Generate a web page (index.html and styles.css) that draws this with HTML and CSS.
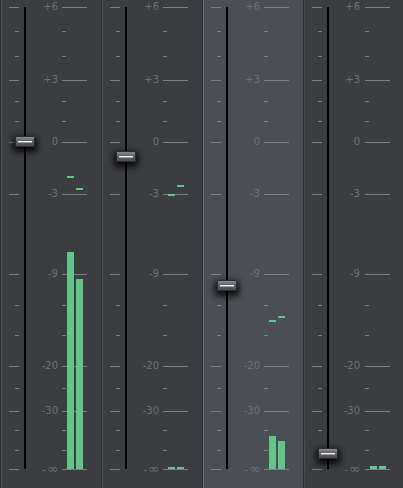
FILE: index.html
```html
<!DOCTYPE html>
<html>
<head>
<meta charset="utf-8">
<link rel="stylesheet" href="styles.css">
</head>
<body>
<div class="mixer">
  <div class="strip">
    <div class="scale">
      <div class="tick major" style="top:7px"><span class="tl"></span><span class="lbl">+6</span><span class="tr"></span></div>
      <div class="tick" style="top:31px"><span class="tl"></span><span class="lbl"></span><span class="tr"></span></div>
      <div class="tick" style="top:56px"><span class="tl"></span><span class="lbl"></span><span class="tr"></span></div>
      <div class="tick major" style="top:80px"><span class="tl"></span><span class="lbl">+3</span><span class="tr"></span></div>
      <div class="tick" style="top:101px"><span class="tl"></span><span class="lbl"></span><span class="tr"></span></div>
      <div class="tick" style="top:121px"><span class="tl"></span><span class="lbl"></span><span class="tr"></span></div>
      <div class="tick major" style="top:142px"><span class="tl"></span><span class="lbl">0</span><span class="tr"></span></div>
      <div class="tick major" style="top:194px"><span class="tl"></span><span class="lbl">-3</span><span class="tr"></span></div>
      <div class="tick major" style="top:274px"><span class="tl"></span><span class="lbl">-9</span><span class="tr"></span></div>
      <div class="tick" style="top:305px"><span class="tl"></span><span class="lbl"></span><span class="tr"></span></div>
      <div class="tick" style="top:335px"><span class="tl"></span><span class="lbl"></span><span class="tr"></span></div>
      <div class="tick major" style="top:366px"><span class="tl"></span><span class="lbl">-20</span><span class="tr"></span></div>
      <div class="tick" style="top:388px"><span class="tl"></span><span class="lbl"></span><span class="tr"></span></div>
      <div class="tick major" style="top:411px"><span class="tl"></span><span class="lbl">-30</span><span class="tr"></span></div>
      <div class="tick" style="top:430px"><span class="tl"></span><span class="lbl"></span><span class="tr"></span></div>
      <div class="tick" style="top:450px"><span class="tl"></span><span class="lbl"></span><span class="tr"></span></div>
      <div class="tick major" style="top:469px"><span class="tl"></span><span class="lbl">-<span class="inf">∞</span></span><span class="tr"></span></div>
    </div>
    <div class="track"></div>
    <div class="meter">
      <div class="bar b1" style="height:217px"></div>
      <div class="bar b2" style="height:190px"></div>
      <div class="peak b1" style="top:176px"></div>
      <div class="peak b2" style="top:188px"></div>
    </div>
    <div class="knob" style="top:136px"></div>
  </div>

  <div class="strip">
    <div class="scale">
      <div class="tick major" style="top:7px"><span class="tl"></span><span class="lbl">+6</span><span class="tr"></span></div>
      <div class="tick" style="top:31px"><span class="tl"></span><span class="lbl"></span><span class="tr"></span></div>
      <div class="tick" style="top:56px"><span class="tl"></span><span class="lbl"></span><span class="tr"></span></div>
      <div class="tick major" style="top:80px"><span class="tl"></span><span class="lbl">+3</span><span class="tr"></span></div>
      <div class="tick" style="top:101px"><span class="tl"></span><span class="lbl"></span><span class="tr"></span></div>
      <div class="tick" style="top:121px"><span class="tl"></span><span class="lbl"></span><span class="tr"></span></div>
      <div class="tick major" style="top:142px"><span class="tl"></span><span class="lbl">0</span><span class="tr"></span></div>
      <div class="tick major" style="top:194px"><span class="tl"></span><span class="lbl">-3</span><span class="tr"></span></div>
      <div class="tick major" style="top:274px"><span class="tl"></span><span class="lbl">-9</span><span class="tr"></span></div>
      <div class="tick" style="top:305px"><span class="tl"></span><span class="lbl"></span><span class="tr"></span></div>
      <div class="tick" style="top:335px"><span class="tl"></span><span class="lbl"></span><span class="tr"></span></div>
      <div class="tick major" style="top:366px"><span class="tl"></span><span class="lbl">-20</span><span class="tr"></span></div>
      <div class="tick" style="top:388px"><span class="tl"></span><span class="lbl"></span><span class="tr"></span></div>
      <div class="tick major" style="top:411px"><span class="tl"></span><span class="lbl">-30</span><span class="tr"></span></div>
      <div class="tick" style="top:430px"><span class="tl"></span><span class="lbl"></span><span class="tr"></span></div>
      <div class="tick" style="top:450px"><span class="tl"></span><span class="lbl"></span><span class="tr"></span></div>
      <div class="tick major" style="top:469px"><span class="tl"></span><span class="lbl">-<span class="inf">∞</span></span><span class="tr"></span></div>
    </div>
    <div class="track"></div>
    <div class="meter">
      <div class="bar b1" style="height:2px"></div>
      <div class="bar b2" style="height:2px"></div>
      <div class="peak b1" style="top:194px"></div>
      <div class="peak b2" style="top:185px"></div>
    </div>
    <div class="knob" style="top:151px"></div>
  </div>

  <div class="strip selected">
    <div class="scale">
      <div class="tick major" style="top:7px"><span class="tl"></span><span class="lbl">+6</span><span class="tr"></span></div>
      <div class="tick" style="top:31px"><span class="tl"></span><span class="lbl"></span><span class="tr"></span></div>
      <div class="tick" style="top:56px"><span class="tl"></span><span class="lbl"></span><span class="tr"></span></div>
      <div class="tick major" style="top:80px"><span class="tl"></span><span class="lbl">+3</span><span class="tr"></span></div>
      <div class="tick" style="top:101px"><span class="tl"></span><span class="lbl"></span><span class="tr"></span></div>
      <div class="tick" style="top:121px"><span class="tl"></span><span class="lbl"></span><span class="tr"></span></div>
      <div class="tick major" style="top:142px"><span class="tl"></span><span class="lbl">0</span><span class="tr"></span></div>
      <div class="tick major" style="top:194px"><span class="tl"></span><span class="lbl">-3</span><span class="tr"></span></div>
      <div class="tick major" style="top:274px"><span class="tl"></span><span class="lbl">-9</span><span class="tr"></span></div>
      <div class="tick" style="top:305px"><span class="tl"></span><span class="lbl"></span><span class="tr"></span></div>
      <div class="tick" style="top:335px"><span class="tl"></span><span class="lbl"></span><span class="tr"></span></div>
      <div class="tick major" style="top:366px"><span class="tl"></span><span class="lbl">-20</span><span class="tr"></span></div>
      <div class="tick" style="top:388px"><span class="tl"></span><span class="lbl"></span><span class="tr"></span></div>
      <div class="tick major" style="top:411px"><span class="tl"></span><span class="lbl">-30</span><span class="tr"></span></div>
      <div class="tick" style="top:430px"><span class="tl"></span><span class="lbl"></span><span class="tr"></span></div>
      <div class="tick" style="top:450px"><span class="tl"></span><span class="lbl"></span><span class="tr"></span></div>
      <div class="tick major" style="top:469px"><span class="tl"></span><span class="lbl">-<span class="inf">∞</span></span><span class="tr"></span></div>
    </div>
    <div class="track"></div>
    <div class="meter">
      <div class="bar b1" style="height:33px"></div>
      <div class="bar b2" style="height:28px"></div>
      <div class="peak b1" style="top:320px"></div>
      <div class="peak b2" style="top:316px"></div>
    </div>
    <div class="knob" style="top:280px"></div>
  </div>

  <div class="strip">
    <div class="scale">
      <div class="tick major" style="top:7px"><span class="tl"></span><span class="lbl">+6</span><span class="tr"></span></div>
      <div class="tick" style="top:31px"><span class="tl"></span><span class="lbl"></span><span class="tr"></span></div>
      <div class="tick" style="top:56px"><span class="tl"></span><span class="lbl"></span><span class="tr"></span></div>
      <div class="tick major" style="top:80px"><span class="tl"></span><span class="lbl">+3</span><span class="tr"></span></div>
      <div class="tick" style="top:101px"><span class="tl"></span><span class="lbl"></span><span class="tr"></span></div>
      <div class="tick" style="top:121px"><span class="tl"></span><span class="lbl"></span><span class="tr"></span></div>
      <div class="tick major" style="top:142px"><span class="tl"></span><span class="lbl">0</span><span class="tr"></span></div>
      <div class="tick major" style="top:194px"><span class="tl"></span><span class="lbl">-3</span><span class="tr"></span></div>
      <div class="tick major" style="top:274px"><span class="tl"></span><span class="lbl">-9</span><span class="tr"></span></div>
      <div class="tick" style="top:305px"><span class="tl"></span><span class="lbl"></span><span class="tr"></span></div>
      <div class="tick" style="top:335px"><span class="tl"></span><span class="lbl"></span><span class="tr"></span></div>
      <div class="tick major" style="top:366px"><span class="tl"></span><span class="lbl">-20</span><span class="tr"></span></div>
      <div class="tick" style="top:388px"><span class="tl"></span><span class="lbl"></span><span class="tr"></span></div>
      <div class="tick major" style="top:411px"><span class="tl"></span><span class="lbl">-30</span><span class="tr"></span></div>
      <div class="tick" style="top:430px"><span class="tl"></span><span class="lbl"></span><span class="tr"></span></div>
      <div class="tick" style="top:450px"><span class="tl"></span><span class="lbl"></span><span class="tr"></span></div>
      <div class="tick major" style="top:469px"><span class="tl"></span><span class="lbl">-<span class="inf">∞</span></span><span class="tr"></span></div>
    </div>
    <div class="track"></div>
    <div class="meter">
      <div class="bar b1" style="height:3px"></div>
      <div class="bar b2" style="height:3px"></div>
    </div>
    <div class="knob" style="top:448px"></div>
  </div>
</div>
</body>
</html>
```

FILE: styles.css
```css
* { box-sizing: border-box; }
html, body {
  margin: 0;
  padding: 0;
  width: 403px;
  height: 488px;
  overflow: hidden;
  background: #3b3d41;
  font-family: "DejaVu Sans", sans-serif;
}
.mixer {
  display: grid;
  grid-template-columns: 101px 101px 101px 100px;
  height: 488px;
}
.strip {
  position: relative;
  height: 488px;
  background: #3b3d41;
  border-left: 1px solid #2c2e31;
  box-shadow: inset 1px 0 0 #4a4d52;
}
.strip.selected {
  background: #4a4f55;
  border-left: 1px solid #2c2e31;
  box-shadow: inset 1px 0 0 #6c7178;
}
.scale {
  position: absolute;
  inset: 0;
}
.tick {
  position: absolute;
  left: 0;
  right: 0;
  height: 1px;
}
.tl {
  position: absolute;
  top: 0;
  left: 14px;
  width: 4px;
  height: 1px;
  background: #7d8084;
}
.tr {
  position: absolute;
  top: 0;
  left: 61px;
  width: 4px;
  height: 1px;
  background: #7d8084;
}
.tick.major .tl { left: 8px; width: 10px; }
.tick.major .tr { width: 25px; }
.lbl {
  position: absolute;
  right: 43px;
  top: -6px;
  font-size: 10px;
  line-height: 12px;
  color: #6d7074;
  white-space: nowrap;
}
.inf {
  font-family: "DejaVu Sans", sans-serif;
  font-size: 13px;
  line-height: 12px;
  margin-left: 1px;
}
.track {
  position: absolute;
  left: 23px;
  top: 7px;
  width: 2px;
  height: 462px;
  background: #000;
}
.meter {
  position: absolute;
  inset: 0;
}
.bar {
  position: absolute;
  bottom: 19px;
  width: 7px;
  background: #62c68a;
}
.b1 { left: 66px; }
.b2 { left: 75px; }
.peak {
  position: absolute;
  width: 7px;
  height: 2px;
  background: #62c68a;
}
.knob {
  position: absolute;
  left: 14px;
  width: 20px;
  height: 11px;
  border-radius: 1px;
  background: linear-gradient(#8a8c8f, #5e6064 45%, #4a4c50);
  border: 1px solid #2a2b2e;
  box-shadow: 0 3px 6px 2px rgba(0,0,0,0.85);
}
.knob::after {
  content: "";
  position: absolute;
  left: 2px;
  right: 2px;
  top: 4px;
  height: 1px;
  background: #f2f2f2;
  box-shadow: 0 1px 0 #9a9c9f;
}
```
